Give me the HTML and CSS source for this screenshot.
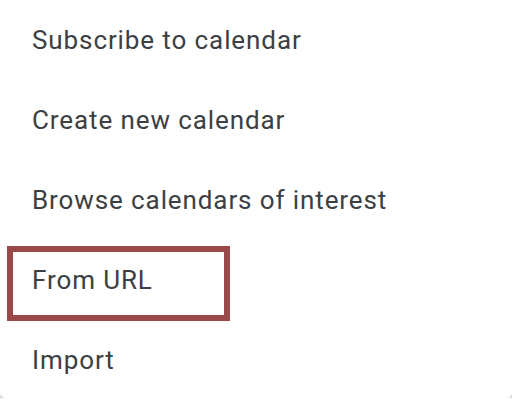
FILE: index.html
```html
<!DOCTYPE html>
<html>
<head>
<meta charset="utf-8">
<link rel="stylesheet" href="styles.css">
</head>
<body>
<div class="menu">
  <div class="item">Subscribe to calendar</div>
  <div class="item">Create new calendar</div>
  <div class="item">Browse calendars of interest</div>
  <div class="item highlighted">From URL<span class="mark"></span></div>
  <div class="item">Import</div>
</div>
</body>
</html>
```
FILE: styles.css
```css
html, body {
  margin: 0;
  padding: 0;
  background: #ffffff;
  overflow: hidden;
}
.menu {
  margin-top: 0;
  width: 512px;
  background: #ffffff;
  border-radius: 0 0 5px 5px;
  box-shadow: 0 2px 4px rgba(0, 0, 0, 0.35);
  display: flex;
  flex-direction: column;
}
.item {
  height: 80px;
  padding-left: 32px;
  display: flex;
  align-items: center;
  font-family: Roboto, "Noto Sans", sans-serif;
  font-size: 26px;
  letter-spacing: 0.9px;
  line-height: 30px;
  color: #3c4043;
  box-sizing: border-box;
}
.item:last-child {
  height: 78px;
  align-items: flex-start;
  padding-top: 25px;
}
.highlighted {
  position: relative;
}
.mark {
  position: absolute;
  left: 7px;
  top: 6px;
  width: 223px;
  height: 75px;
  border: 6px solid #9a4848;
  box-sizing: border-box;
}
```
